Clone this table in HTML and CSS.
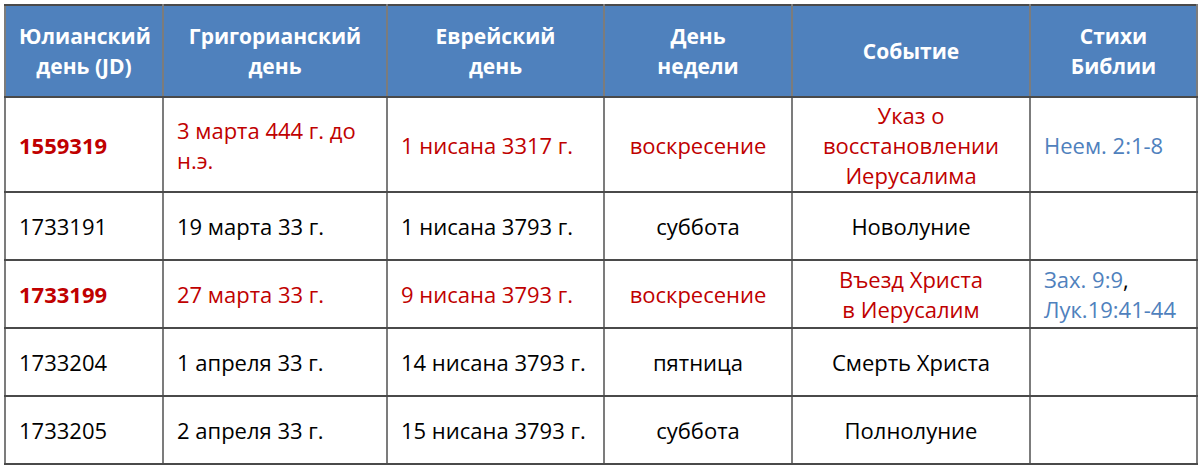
FILE: index.html
```html
<!DOCTYPE html>
<html lang="ru">
<head>
<meta charset="utf-8">
<link rel="stylesheet" href="styles.css">
</head>
<body>
<table class="cal">
  <colgroup>
    <col class="c1"><col class="c2"><col class="c3"><col class="c4"><col class="c5"><col class="c6">
  </colgroup>
  <thead>
    <tr class="head">
      <th>Юлианский<br>день (JD)</th>
      <th>Григорианский<br>день</th>
      <th>Еврейский<br>день</th>
      <th>День<br>недели</th>
      <th>Событие</th>
      <th>Стихи<br>Библии</th>
    </tr>
  </thead>
  <tbody>
    <tr class="r-tall red">
      <td class="left jd">1559319</td>
      <td class="left">3 марта 444 г. до<br>н.э.</td>
      <td class="left">1 нисана 3317 г.</td>
      <td class="center">воскресение</td>
      <td class="center">Указ о<br>восстановлении<br>Иерусалима</td>
      <td class="left ref">Неем. 2:1-8</td>
    </tr>
    <tr class="r">
      <td class="left">1733191</td>
      <td class="left">19 марта 33 г.</td>
      <td class="left">1 нисана 3793 г.</td>
      <td class="center">суббота</td>
      <td class="center">Новолуние</td>
      <td class="left"></td>
    </tr>
    <tr class="r red">
      <td class="left jd">1733199</td>
      <td class="left">27 марта 33 г.</td>
      <td class="left">9 нисана 3793 г.</td>
      <td class="center">воскресение</td>
      <td class="center">Въезд Христа<br>в Иерусалим</td>
      <td class="left ref"><span>Зах. 9:9</span><span class="comma">,</span><br>Лук.19:41-44</td>
    </tr>
    <tr class="r">
      <td class="left">1733204</td>
      <td class="left">1 апреля 33 г.</td>
      <td class="left">14 нисана 3793 г.</td>
      <td class="center">пятница</td>
      <td class="center">Смерть Христа</td>
      <td class="left"></td>
    </tr>
    <tr class="r">
      <td class="left">1733205</td>
      <td class="left">2 апреля 33 г.</td>
      <td class="left">15 нисана 3793 г.</td>
      <td class="center">суббота</td>
      <td class="center">Полнолуние</td>
      <td class="left"></td>
    </tr>
  </tbody>
</table>
</body>
</html>
```

FILE: styles.css
```css
html, body {
  margin: 0;
  padding: 0;
  background: #ffffff;
}

body {
  padding: 4px 0 0 4px;
  font-family: "Open Sans", "Noto Sans", "Liberation Sans", sans-serif;
  font-size: 22px;
  line-height: 30px;
  color: #000000;
}

.cal {
  border-collapse: collapse;
  table-layout: fixed;
  width: 1192px;
  border: 2px solid #6a6a6a;
}

.c1 { width: 158px; }
.c2 { width: 224px; }
.c3 { width: 217px; }
.c4 { width: 188px; }
.c5 { width: 238px; }
.c6 { width: 167px; }

.cal th,
.cal td {
  padding: 0 13px;
  vertical-align: middle;
  white-space: nowrap;
  border-left: 2px solid #7c7c7c;
  border-right: 2px solid #7c7c7c;
  border-top: 2px solid #4a4a4a;
  border-bottom: 2px solid #4a4a4a;
}

.head th {
  height: 90px;
  background: #4f81bd;
  color: #ffffff;
  font-size: 21px;
  font-weight: 700;
  text-align: center;
}

.r-tall td { height: 93px; }
.r td { height: 66px; }

.left { text-align: left; }
.center { text-align: center; }

.red td { color: #c00000; }
.red td.jd { font-weight: 700; }

.cal td.ref { color: #4f81bd; }
.cal td.ref .comma { color: #000000; }
```
